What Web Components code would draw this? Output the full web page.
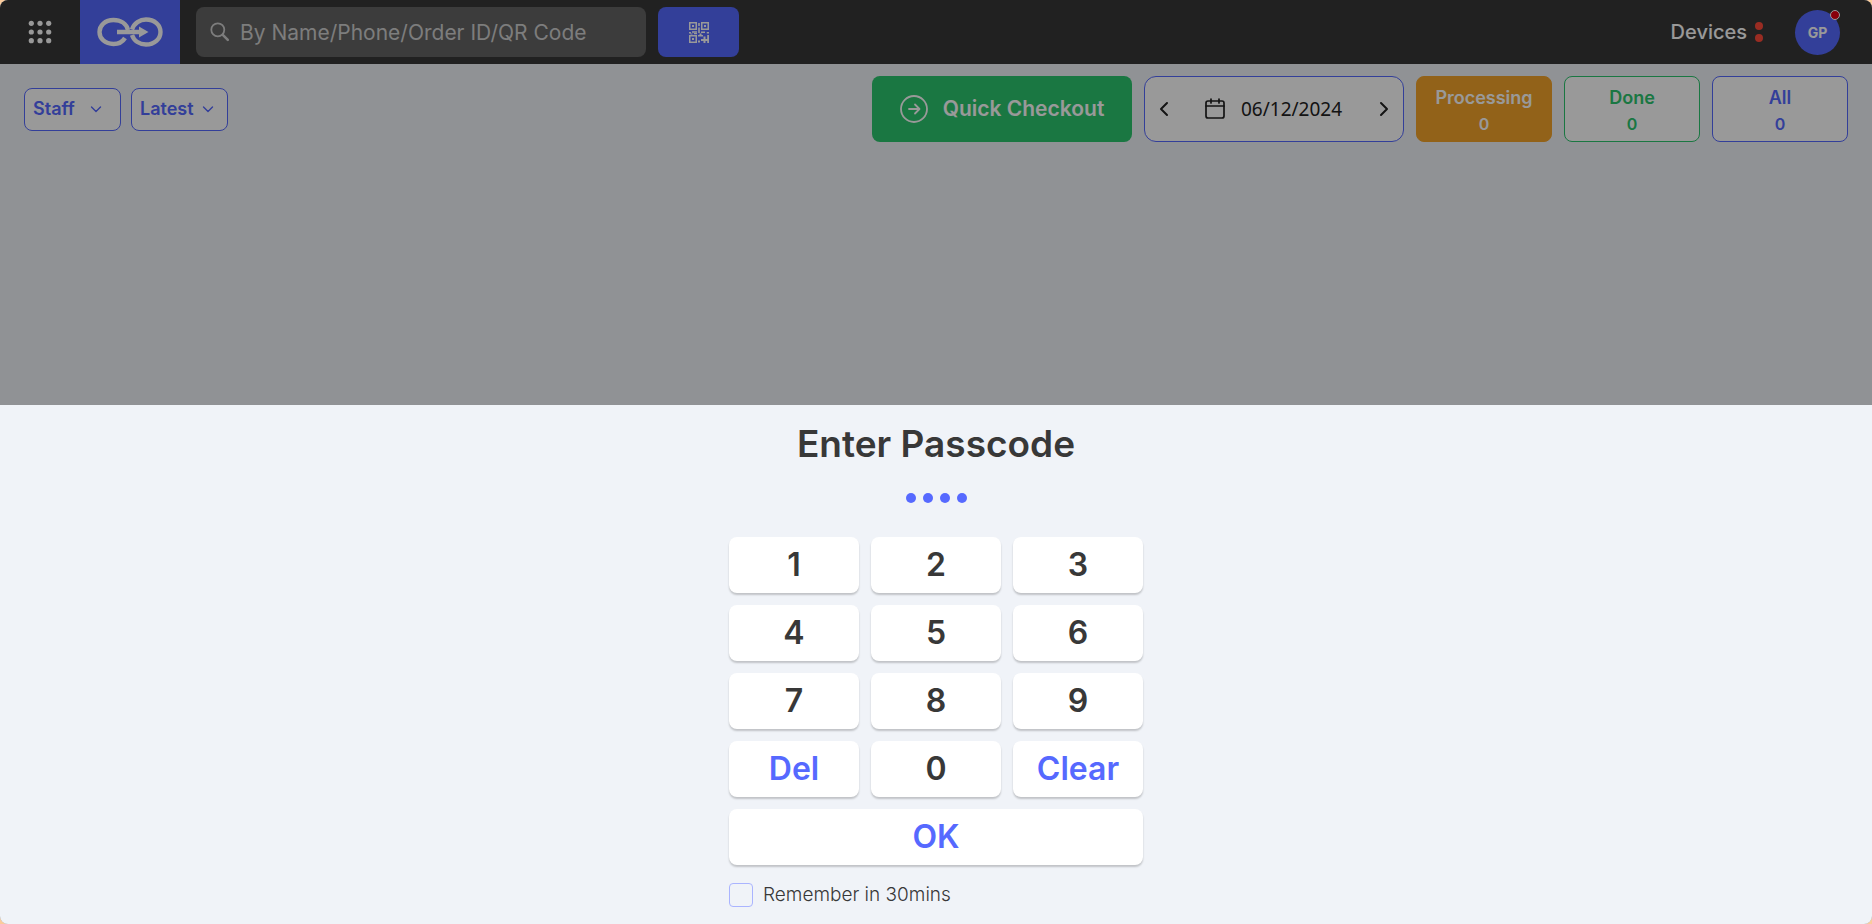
<!DOCTYPE html>
<html lang="en">
<head>
<meta charset="utf-8">
<title>Orders</title>
<style>
html { background: #fbcc9c; }
body {
  margin: 0;
  font-family: Inter, "Open Sans", sans-serif;
  color: #383838;
  --blue: #5669ff;
  --green: #2cc66e;
  --amber: #f4a42a;
  --surface: #f0f3f8;
}
</style>
</head>
<body>
<pos-shell>
  <pos-header slot="header"></pos-header>
  <pos-toolbar slot="toolbar"></pos-toolbar>
  <passcode-sheet slot="sheet"></passcode-sheet>
</pos-shell>

<script>
function define(name, html) {
  const template = document.createElement('template');
  template.innerHTML = '<style>*{box-sizing:border-box}button,input,select{font:inherit;color:inherit;margin:0}</style>' + html;
  customElements.define(name, class extends HTMLElement {
    connectedCallback() {
      if (this.shadowRoot) return;
      this.attachShadow({ mode: 'open' }).append(template.content.cloneNode(true));
    }
  });
}

define('pos-shell', `
<style>
:host { display: flex; flex-direction: column; position: relative; min-height: 100vh; border-radius: 8px; overflow: hidden; background: var(--surface); }
.overlay { position: absolute; inset: 0; display: flex; flex-direction: column; justify-content: flex-end; background: rgba(0,0,0,.4); }
</style>
<slot name="header"></slot>
<main><slot name="toolbar"></slot></main>
<div class="overlay"><slot name="sheet"></slot></div>`);

define('pos-header', `
<style>
:host { display: block; }
header { display: flex; align-items: center; height: 64px; padding-right: 32px; background: #383838; color: #fff; }
button { display: grid; place-items: center; border: 0; padding: 0; background: none; }
.apps { width: 80px; height: 64px; }
.logo { display: grid; place-items: center; width: 100px; height: 64px; background: var(--blue); }
.search { display: flex; align-items: center; gap: 10px; width: 450px; height: 50px; margin-left: 16px; padding: 0 14px; border-radius: 8px; background: #646464; }
.search svg { flex: none; }
.search input { flex: 1; min-width: 0; height: 32px; padding: 0; border: 0; outline: 0; background: none; font-size: 21px; }
.search input::placeholder { color: #d0d0d0; opacity: 1; }
.scan { width: 81px; height: 50px; margin-left: 12px; border-radius: 8px; background: var(--blue); }
.devices { display: flex; align-items: center; gap: 8px; margin-left: auto; font-size: 20px; font-weight: 500; line-height: 30px; }
.status { display: grid; gap: 4px; }
.status i { width: 8px; height: 8px; border-radius: 50%; background: #ff4a3a; }
.avatar { position: relative; width: 45px; height: 45px; margin-left: 32px; border-radius: 50%; background: var(--blue); font-size: 14px; font-weight: 700; }
.badge { position: absolute; top: 0; right: 0; width: 10px; height: 10px; border: 1px solid #fff; border-radius: 50%; background: #e60012; }
</style>
<header>
  <button class="apps" aria-label="Apps">
    <svg width="24" height="24" viewBox="0 0 24 24" fill="#fff">
      <circle cx="3.3" cy="3.3" r="2.6"/><circle cx="12" cy="3.3" r="2.6"/><circle cx="20.7" cy="3.3" r="2.6"/>
      <circle cx="3.3" cy="12" r="2.6"/><circle cx="12" cy="12" r="2.6"/><circle cx="20.7" cy="12" r="2.6"/>
      <circle cx="3.3" cy="20.7" r="2.6"/><circle cx="12" cy="20.7" r="2.6"/><circle cx="20.7" cy="20.7" r="2.6"/>
    </svg>
  </button>
  <a class="logo" href="#" aria-label="Home">
    <svg width="66" height="30" viewBox="0 0 66 30" fill="none" stroke="#fff" stroke-width="4.4">
      <path d="M31 13C29.500 6.500 23.500 3 16.500 3 8 3 2.500 8.500 2.500 15S8 27 16.500 27c5 0 9-2 11.500-6"/>
      <path d="M35 12.500C37 6 43 2.500 49 2.500c8.500 0 14.500 5.500 14.500 12.500S57.500 27.500 49 27.500c-6.500 0-12-3.500-14-9.500"/>
      <path d="M20 15h24"/><path d="M42 9.500 51.500 15 42 20.500Z" fill="#fff" stroke="none"/>
    </svg>
  </a>
  <label class="search">
    <svg width="20" height="20" viewBox="0 0 20 20" fill="none" stroke="#d0d0d0" stroke-width="1.800" stroke-linecap="round"><circle cx="7.800" cy="7.800" r="6.500"/><path d="m12.800 12.800 5 5" stroke-width="2.600"/></svg>
    <input type="text" placeholder="By Name/Phone/Order ID/QR Code" aria-label="Search">
  </label>
  <button class="scan" aria-label="Scan QR code">
    <svg width="20" height="21" viewBox="0 0 20 21" fill="#fff">
      <path fill-rule="evenodd" d="M0 0h8v8H0zM1.500 1.500v5h5v-5zM12 0h8v8h-8zM13.500 1.500v5h5v-5zM0 13h8v8H0zM1.500 14.500v5h5v-5z"/>
      <path d="M3 3h2v2H3zM15 3h2v2h-2zM3 16h2v2H3zM9.200 1h1.600v3H9.200zM9.200 5.500h1.600V11H9.200zM0 10h2v1.500H0zM3 9.300h5v1.500H3zM12 9.500h4V11h-4zM17.800 10h2.200v1.500h-2.200zM1.500 11.500h2v1h-2zM5 11h3v1.200H5zM9 13h5v1.500H9zM10.500 11.500h2V13h-2zM9 18.500h2v2H9zM14.500 14.500h2V17h1.700v-4H20v8h-1.800v-2h-1.700v2h-2v-2H12v-2h2.500z"/>
    </svg>
  </button>
  <button class="devices"><span>Devices</span><span class="status"><i></i><i></i></span></button>
  <button class="avatar" aria-label="Account GP">GP<span class="badge"></span></button>
</header>`);

define('filter-select', `
<style>
:host { display: grid; align-items: center; }
::slotted(select) { grid-area: 1 / 1; }
svg { grid-area: 1 / 1; justify-self: end; margin-right: 14px; pointer-events: none; }
:host([wide-end]) svg { margin-right: 19px; }
</style>
<slot></slot>
<svg width="12" height="12" viewBox="0 0 12 12" fill="none" stroke="var(--blue)" stroke-width="1.400" stroke-linecap="round" stroke-linejoin="round"><path d="m1.500 4 4.500 4.500L10.500 4"/></svg>`);

define('status-tab', `
<style>
:host { display: block; width: 136px; color: var(--tone); }
button { display: block; width: 100%; height: 66px; padding: 7px 0 5px; border: 1px solid currentColor; border-radius: 8px; background: #fff; text-align: center; font-weight: 600; }
:host([active]) button { background: var(--tone); border-color: var(--tone); color: #fff; }
span { display: block; font-size: 18px; line-height: 28px; }
.count { font-size: 16px; line-height: 24px; }
</style>
<button><span><slot></slot></span><span class="count"><slot name="count"></slot></span></button>`);

define('date-picker', `
<style>
:host { display: flex; align-items: center; justify-content: space-between; width: 260px; height: 66px; padding: 0 7px; border: 1px solid var(--blue); border-radius: 12px; background: #fff; box-sizing: border-box; color: #222; }
button { display: grid; place-items: center; width: 24px; height: 40px; padding: 0; border: 0; background: none; }
label { display: flex; align-items: center; gap: 16px; }
input { width: 102px; padding: 0; border: 0; background: none; font: 19px/28px "Noto Sans", sans-serif; }
</style>
<button aria-label="Previous day"><svg width="10" height="16" viewBox="0 0 10 16" fill="none" stroke="#222" stroke-width="2" stroke-linecap="round" stroke-linejoin="round"><path d="M8 2 2 8l6 6"/></svg></button>
<label>
  <svg width="20" height="22" viewBox="0 0 20 22" fill="none" stroke="#222" stroke-width="1.700" stroke-linecap="round"><rect x="1" y="3" width="18" height="17" rx="2"/><path d="M1 8h18M6 1v4M14 1v4"/></svg>
  <input type="text" value="06/12/2024" aria-label="Date">
</label>
<button aria-label="Next day"><svg width="10" height="16" viewBox="0 0 10 16" fill="none" stroke="#222" stroke-width="2" stroke-linecap="round" stroke-linejoin="round"><path d="m2 2 6 6-6 6"/></svg></button>`);

define('pos-toolbar', `
<style>
:host { display: flex; align-items: center; gap: 12px; padding: 12px 24px; }
.filters { display: flex; gap: 10px; margin-right: auto; }
select { width: 97px; height: 43px; padding: 0 8px; border: 1px solid var(--blue); border-radius: 8px; background: #fff; color: var(--blue); font-size: 18px; font-weight: 600; line-height: 24px; appearance: none; }
.checkout { display: flex; align-items: center; justify-content: center; gap: 15px; width: 260px; height: 66px; padding: 0; border: 0; border-radius: 8px; background: var(--green); color: #fff; font-size: 21px; font-weight: 600; line-height: 30px; }
.done { --tone: var(--green); }
.processing { --tone: var(--amber); }
.all { --tone: var(--blue); }
</style>
<div class="filters">
  <filter-select wide-end><select aria-label="Staff"><option>Staff</option></select></filter-select>
  <filter-select><select aria-label="Sort order"><option>Latest</option></select></filter-select>
</div>
<button class="checkout">
  <svg width="28" height="28" viewBox="0 0 28 28" fill="none" stroke="#fff" stroke-width="1.800" stroke-linecap="round" stroke-linejoin="round"><circle cx="14" cy="14" r="13"/><path d="M9 14h10M15 9.500l4.500 4.500-4.500 4.500"/></svg>
  Quick Checkout
</button>
<date-picker></date-picker>
<status-tab class="processing" active>Processing<span slot="count">0</span></status-tab>
<status-tab class="done">Done<span slot="count">0</span></status-tab>
<status-tab class="all">All<span slot="count">0</span></status-tab>`);

define('key-button', `
<style>
:host { display: block; }
:host([wide]) { grid-column: 1 / -1; }
button { display: block; width: 100%; height: 56px; padding: 0; border: 0; border-radius: 8px; background: #fff; box-shadow: 0 2px 2px rgba(0,0,0,.2); font-size: 32px; font-weight: 600; line-height: 48px; }
:host([action]) button { color: var(--blue); }
</style>
<button><slot></slot></button>`);

define('passcode-sheet', `
<style>
:host { display: flex; flex-direction: column; align-items: center; padding: 12px 16px 17px; background: var(--surface); }
h1 { margin: 0; font-size: 37px; font-weight: 600; line-height: 54px; }
.dots { display: flex; gap: 7px; margin: 22px 0 34px; }
.dots i { width: 10px; height: 10px; border-radius: 50%; background: var(--blue); }
.pad { display: grid; grid-template-columns: repeat(3, 1fr); gap: 12px; width: 100%; max-width: 414px; }
label { display: flex; align-items: center; gap: 10px; width: 100%; max-width: 414px; margin-top: 18px; font-size: 19px; font-weight: 300; line-height: 24px; }
input { appearance: none; width: 24px; height: 24px; border: 1px solid #aab4ff; border-radius: 4px; }
input:checked { background: var(--blue); }
</style>
<h1>Enter Passcode</h1>
<div class="dots" role="img" aria-label="4 digits"><i></i><i></i><i></i><i></i></div>
<div class="pad">
  <key-button>1</key-button><key-button>2</key-button><key-button>3</key-button>
  <key-button>4</key-button><key-button>5</key-button><key-button>6</key-button>
  <key-button>7</key-button><key-button>8</key-button><key-button>9</key-button>
  <key-button action>Del</key-button><key-button>0</key-button><key-button action>Clear</key-button>
  <key-button action wide>OK</key-button>
</div>
<label><input type="checkbox">Remember in 30mins</label>`);
</script>
</body>
</html>
